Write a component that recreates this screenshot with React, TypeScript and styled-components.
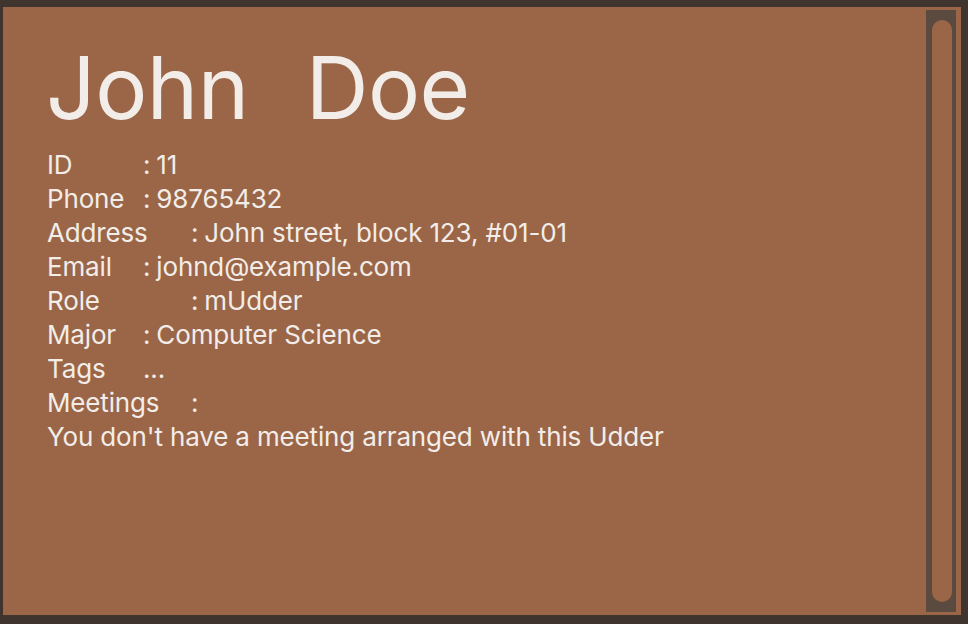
import React from 'react';
import styled, { createGlobalStyle } from 'styled-components';

const GlobalStyle = createGlobalStyle`
  html, body {
    margin: 0;
    padding: 0;
    background: #3f352e;
    font-family: Inter, "Noto Sans", sans-serif;
  }
`;

const Frame = styled.div`
  width: 968px;
  height: 624px;
  box-sizing: border-box;
  padding: 7px 7px 9px 3px;
  background: #3f352e;
`;

const Card = styled.div`
  height: 100%;
  display: flex;
  background: #9a6647;
  color: #f3ede9;
`;

const Content = styled.div`
  flex: 1;
  padding: 21px 0 0 43px;
`;

const Name = styled.h1`
  margin: 0;
  font-size: 87px;
  font-weight: 400;
  line-height: 120px;
  word-spacing: 33px;
  letter-spacing: -0.5px;
`;

const Details = styled.div`
  display: flex;
  flex-direction: column;
  padding-left: 1px;
  font-size: 26px;
  line-height: 34px;
  letter-spacing: -0.15px;
`;

const Row = styled.div`
  display: flex;
  white-space: nowrap;
`;

const Label = styled.span<{ $w: number }>`
  width: ${({ $w }) => $w}px;
  flex: none;
`;

const Colon = styled.span`
  margin-right: 6px;
`;

const Track = styled.div`
  width: 30px;
  margin: 3px 5px 3px 0;
  box-sizing: border-box;
  padding: 10px 4px 10px 6px;
  background: #5a4a3f;
  display: flex;
`;

const Thumb = styled.div`
  flex: 1;
  background: #9a6647;
  border-radius: 10px;
`;

const rows: { label: string; w: number; sep: string; value: string }[] = [
  { label: 'ID', w: 96, sep: ':', value: '11' },
  { label: 'Phone', w: 96, sep: ':', value: '98765432' },
  { label: 'Address', w: 144, sep: ':', value: 'John street, block 123, #01-01' },
  { label: 'Email', w: 96, sep: ':', value: 'johnd@example.com' },
  { label: 'Role', w: 144, sep: ':', value: 'mUdder' },
  { label: 'Major', w: 96, sep: ':', value: 'Computer Science' },
  { label: 'Tags', w: 96, sep: '...', value: '' },
  { label: 'Meetings', w: 144, sep: ':', value: '' },
];

const App = () => {
  return (
    <>
      <GlobalStyle />
      <Frame>
        <Card>
          <Content>
            <Name>John Doe</Name>
            <Details>
              {rows.map((r) => (
                <Row key={r.label}>
                  <Label $w={r.w}>{r.label}</Label>
                  <Colon>{r.sep}</Colon>
                  <span>{r.value}</span>
                </Row>
              ))}
              <Row>You don't have a meeting arranged with this Udder</Row>
            </Details>
          </Content>
          <Track>
            <Thumb />
          </Track>
        </Card>
      </Frame>
    </>
  );
};

export default App;
